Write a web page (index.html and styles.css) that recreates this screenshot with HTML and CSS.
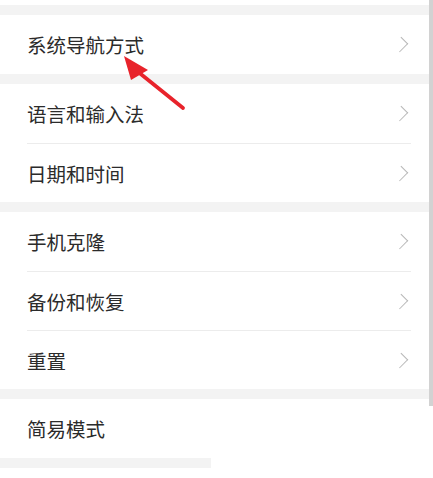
FILE: index.html
```html
<!DOCTYPE html>
<html lang="zh-CN">
<head>
    <meta charset="UTF-8">
    <meta name="viewport" content="width=device-width, initial-scale=1.0">
    <title>设置</title>
    <link rel="stylesheet" href="styles.css">
</head>
<body>
    <div class="page">
        <div class="gap"></div>

        <div class="card">
            <div class="row"><span>系统导航方式</span><i class="chev"></i></div>
        </div>
        <div class="gap"></div>

        <div class="card">
            <div class="row"><span>语言和输入法</span><i class="chev"></i></div>
            <div class="row"><span>日期和时间</span><i class="chev"></i></div>
        </div>
        <div class="gap"></div>

        <div class="card">
            <div class="row"><span>手机克隆</span><i class="chev"></i></div>
            <div class="row"><span>备份和恢复</span><i class="chev"></i></div>
            <div class="row"><span>重置</span><i class="chev"></i></div>
        </div>
        <div class="gap"></div>

        <div class="card">
            <div class="row"><span>简易模式</span></div>
        </div>
        <div class="gap short"></div>

        <!-- scroll indicator -->
        <div class="scrollbar"></div>

        <!-- red annotation arrow -->
        <svg class="arrow" width="433" height="478" viewBox="0 0 433 478">
            <line x1="183" y1="108" x2="137" y2="71" stroke="#e8232b" stroke-width="3.8" stroke-linecap="round"/>
            <polygon points="124,56 148,70 131,80" fill="#e8232b"/>
        </svg>
    </div>
</body>
</html>
```

FILE: styles.css
```css
body {
    margin: 0;
    background-color: white;
    font-family: "Noto Sans CJK SC", "Noto Sans", sans-serif;
}
.page {
    position: relative;
    width: 433px;
    height: 478px;
    overflow: hidden;
    padding-top: 5px;
    box-sizing: border-box;
}
.gap {
    height: 10px;
    background-color: #f3f3f3;
}
.gap.short {
    width: 211px;
}
.card {
    background-color: white;
}
.row {
    height: 59px;
    box-sizing: border-box;
    margin: 0 22px 0 27px;
    display: flex;
    align-items: center;
    justify-content: space-between;
    font-size: 19.5px;
    color: #2b2b2b;
    border-top: 1px solid #ececec;
}
.row:first-child {
    border-top: none;
}
.chev {
    width: 10px;
    height: 10px;
    margin-right: 5px;
    border-top: 1.5px solid #b8b8b8;
    border-right: 1.5px solid #b8b8b8;
    transform: rotate(45deg) scale(0.9, 1.1);
}
.scrollbar {
    position: absolute;
    top: 0;
    right: 0;
    width: 4px;
    height: 406px;
    background-color: #d2d2d2;
}
.arrow {
    position: absolute;
    top: 0;
    left: 0;
}
```
